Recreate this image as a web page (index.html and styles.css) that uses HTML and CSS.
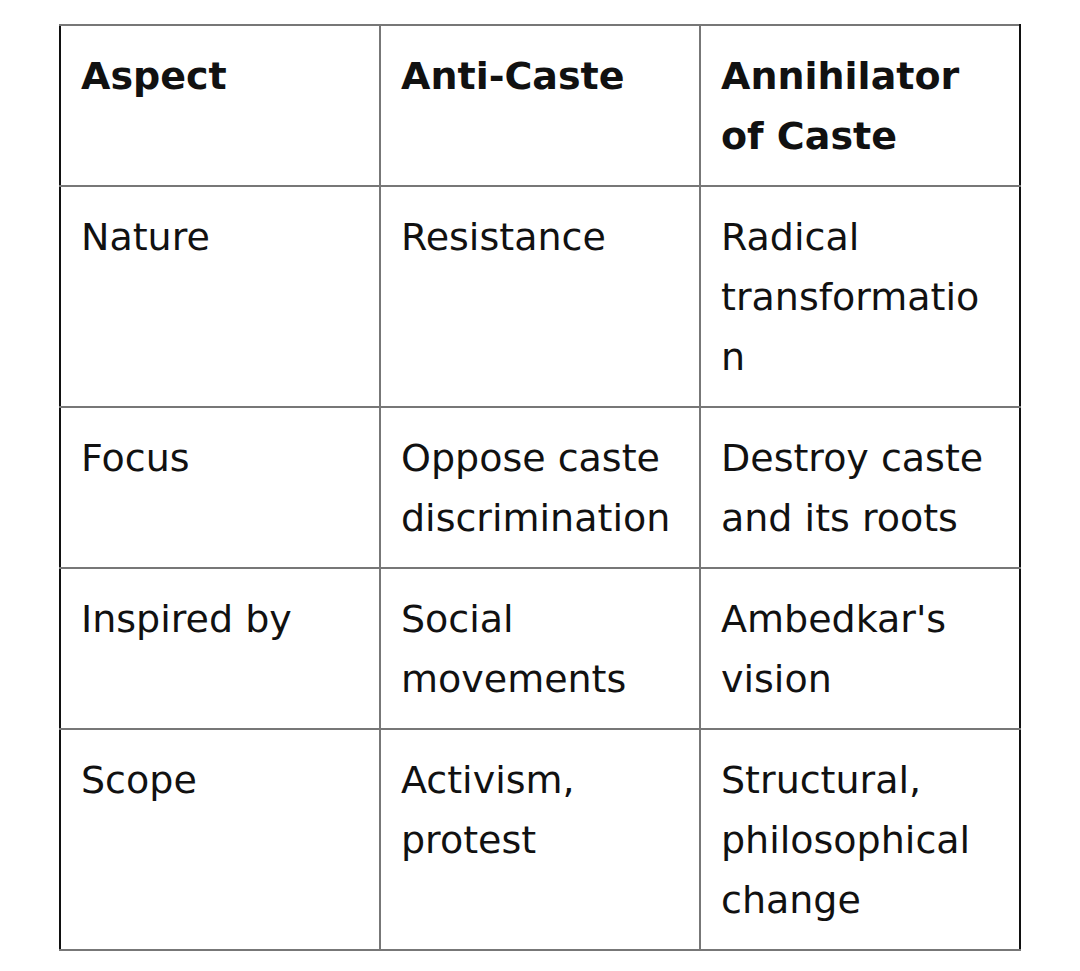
FILE: index.html
```html
<!DOCTYPE html>
<html lang="en">
<head>
<meta charset="utf-8">
<title>Anti-Caste vs Annihilator of Caste</title>
<link rel="stylesheet" href="styles.css">
</head>
<body>
<table class="cmp">
  <colgroup><col class="c"><col class="c"><col class="c"></colgroup>
  <thead>
    <tr><th>Aspect</th><th>Anti-Caste</th><th>Annihilator of Caste</th></tr>
  </thead>
  <tbody>
    <tr><td>Nature</td><td>Resistance</td><td>Radical transformation</td></tr>
    <tr><td>Focus</td><td>Oppose caste discrimination</td><td>Destroy caste and its roots</td></tr>
    <tr><td>Inspired by</td><td>Social movements</td><td>Ambedkar's vision</td></tr>
    <tr><td>Scope</td><td>Activism, protest</td><td>Structural, philosophical change</td></tr>
  </tbody>
</table>
</body>
</html>
```
FILE: styles.css
```css
html, body { margin: 0; padding: 0; background: #fff; }
body { padding: 24px 0 0 59px; font-family: "DejaVu Sans", sans-serif; color: #111; }
.cmp {
  border-collapse: collapse;
  table-layout: fixed;
  width: 961px;
  border-left: 2px solid #111;
  border-right: 2px solid #111;
}
.cmp .c { width: 320px; }
.cmp th, .cmp td {
  border: 2px solid #777;
  padding: 20px 22px 19px 20px;
  font-size: 38px;
  line-height: 60px;
  text-align: left;
  vertical-align: top;
  overflow-wrap: anywhere;
}
.cmp th { font-weight: bold; }
.cmp tr > :first-child { border-left-color: #111; }
.cmp tr > :last-child { border-right-color: #111; }
```
